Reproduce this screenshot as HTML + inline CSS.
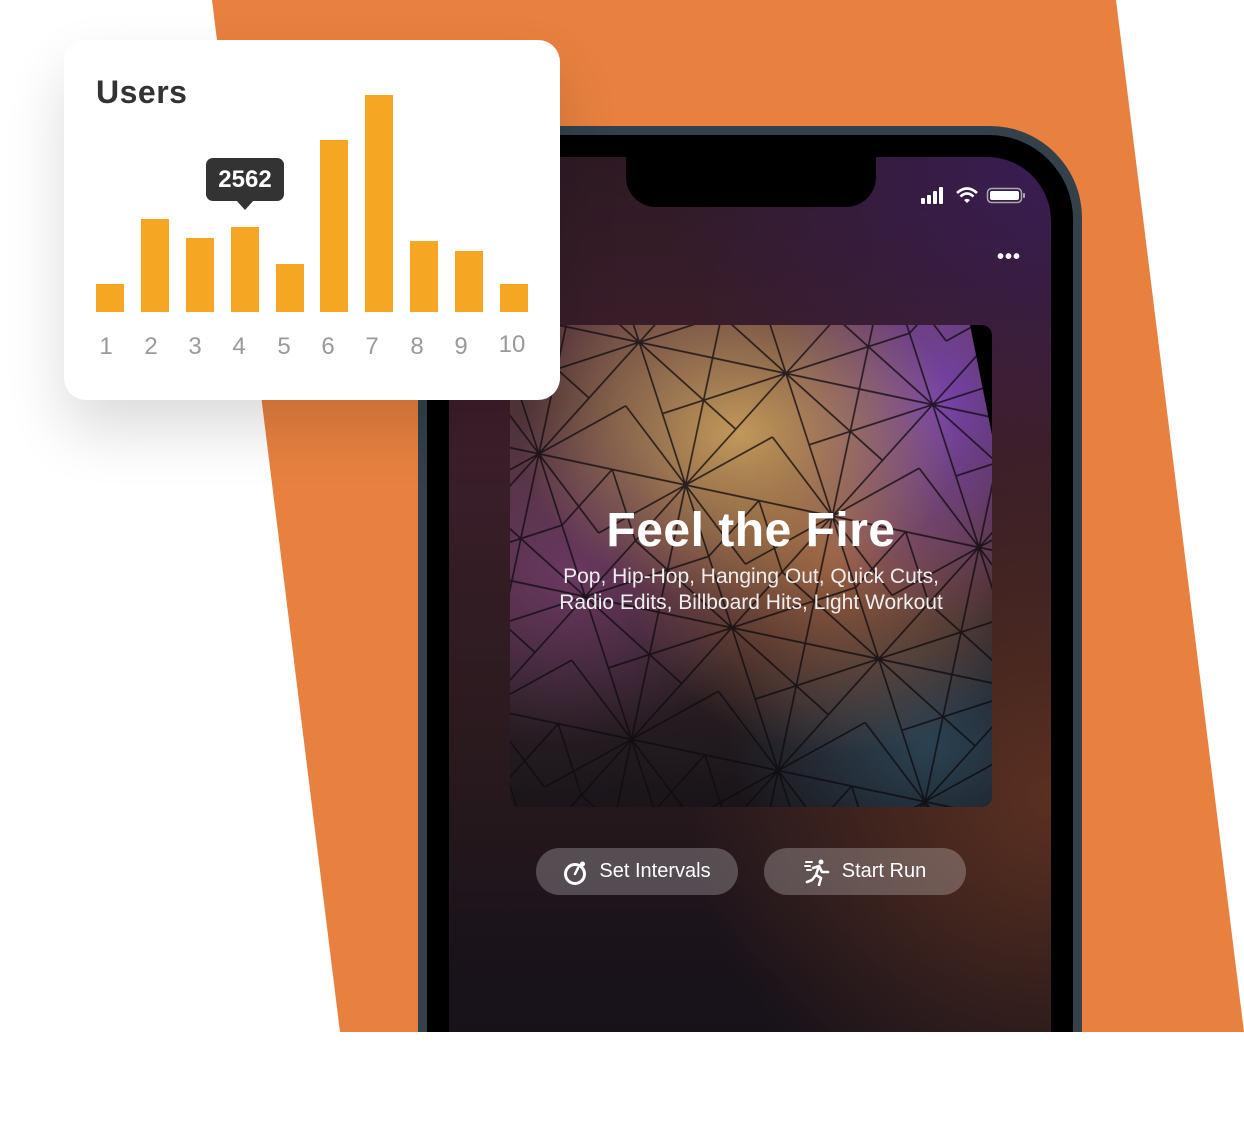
<!DOCTYPE html>
<html><head><meta charset="utf-8"><style>
*{margin:0;padding:0;box-sizing:border-box}
body{width:1244px;height:1142px;background:#fff;position:relative;overflow:hidden;font-family:"Liberation Sans",sans-serif}
.abs{position:absolute}
#clip{position:absolute;left:0;top:0;width:1244px;height:1032px;overflow:hidden}
.phone{left:418px;top:126px;width:664px;height:1000px;background:#34414a;border-radius:92px 92px 0 0}
.bezel{left:9px;top:9px;width:646px;height:990px;background:#000;border-radius:84px 84px 0 0}
.screen{left:22px;top:22px;width:602px;height:970px;border-radius:64px 64px 0 0;overflow:hidden;
background:radial-gradient(ellipse 420px 300px at 620px 0px,#3a1d56 0%,rgba(58,29,86,0) 100%),radial-gradient(ellipse 360px 360px at 600px 640px,#5a3020 0%,rgba(90,48,32,0) 100%),linear-gradient(180deg,#2e1a24 0%,#3e1f2c 25%,#2a1a1e 60%,#18121a 85%,#16121a 100%)}
.notch{left:177px;top:0;width:250px;height:50px;background:#000;border-radius:0 0 30px 30px}
.card{left:64px;top:40px;width:496px;height:360px;background:#fff;border-radius:22px;box-shadow:0 30px 60px rgba(0,0,0,.14)}
.bar{position:absolute;width:28px;background:#f5a623;bottom:88px}
.lbl{position:absolute;top:293px;width:28px;text-align:center;color:#9a9a9a;font-size:24px;font-weight:300}
.btn{position:absolute;top:848px;height:47px;width:202px;border-radius:24px;background:rgba(255,255,255,.24);color:#fff;font-size:20px;display:flex;align-items:center;justify-content:center;gap:10px}
</style></head><body>
<div id="clip">
<svg class="abs" style="left:0;top:0" width="1244" height="1032"><polygon points="212,0 1116,0 1244,1032 340,1032" fill="#e8813f"/></svg>
<div class="abs phone"><div class="abs bezel"><div class="abs screen">
<div class="abs notch"></div>
<svg class="abs" style="left:470px;top:28px" width="110" height="22">
<rect x="2" y="13" width="4" height="6" rx="1" fill="#fff"/><rect x="8" y="10" width="4" height="9" rx="1" fill="#fff"/><rect x="14" y="6" width="4" height="13" rx="1" fill="#fff"/><rect x="20" y="2" width="4" height="17" rx="1" fill="#fff"/>
<path d="M38 8 Q48 -1 58 8" stroke="#fff" stroke-width="2.6" fill="none"/><path d="M41.5 11.5 Q48 5.5 54.5 11.5" stroke="#fff" stroke-width="2.6" fill="none"/><path d="M45 15 L48 18 L51 15 Q48 12.5 45 15Z" fill="#fff"/>
<rect x="68.5" y="3.5" width="34" height="14" rx="4" fill="none" stroke="#aaa" stroke-width="1.5"/><rect x="71" y="6" width="29" height="9" rx="2" fill="#fff"/><rect x="104" y="8" width="2" height="5" rx="1" fill="#aaa"/></svg>
<div class="abs" style="left:548px;top:95px;color:#fff;font-size:20px;letter-spacing:1px;line-height:10px;font-weight:bold">•••</div>
<div class="abs" style="left:61px;top:168px;width:482px;height:482px;border-radius:10px;overflow:hidden;
background:radial-gradient(ellipse 220px 170px at 230px 110px,#e0b068 0%,rgba(200,140,80,0) 100%),radial-gradient(ellipse 170px 220px at 430px 80px,#9050d0 0%,rgba(120,70,180,0) 100%),radial-gradient(ellipse 220px 200px at 330px 230px,#c07850 0%,rgba(160,90,60,0) 100%),radial-gradient(ellipse 190px 170px at 60px 250px,#7a4070 0%,rgba(80,40,70,0) 100%),radial-gradient(ellipse 200px 160px at 420px 420px,#3a5a70 0%,rgba(50,80,100,0) 100%),linear-gradient(180deg,#6a4448 0%,#3e2c32 60%,#201a20 100%)">
<svg class="abs" style="left:0;top:0" width="482" height="482"><defs><pattern id="tp" width="150" height="260" patternUnits="userSpaceOnUse" patternTransform="rotate(12) translate(-20,-10)">
<g transform="scale(1.6667)"><path d="M0 0L45 78L0 156M90 0L45 78L90 156M0 0H90M0 78H90M0 156H90M0 0L67.5 39M90 0L22.5 39M45 78L45 0M45 78L0 117M45 78L90 117M0 39L45 78M90 39L45 78M0 78L22.5 117L0 156M90 78L67.5 117L90 156M45 78L45 156M0 156L67.5 117M90 156L22.5 117" stroke="#120d12" stroke-width="1" fill="none" opacity=".8"/></g></pattern>
<linearGradient id="sh" x1="0" y1="0" x2="1" y2="1"><stop offset="0" stop-color="#000" stop-opacity=".05"/><stop offset="1" stop-color="#000" stop-opacity=".3"/></linearGradient></defs>
<rect width="482" height="482" fill="url(#tp)"/><rect width="482" height="482" fill="url(#sh)"/>
<path d="M460 0L482 0L482 110Z" fill="#000"/></svg>
<div class="abs" style="left:0;top:178px;width:482px;text-align:center;color:#fff;font-weight:bold;font-size:48px;letter-spacing:.5px">Feel the Fire</div>
<div class="abs" style="left:0;top:239px;width:482px;text-align:center;color:#eee;font-size:21px;line-height:26px">Pop, Hip-Hop, Hanging Out, Quick Cuts,<br>Radio Edits, Billboard Hits, Light Workout</div>
</div>
<div class="abs" style="left:36px;top:875px;width:56px;height:56px;border-radius:50%;background:#9a9490"></div>
</div></div></div>
<div class="btn" style="left:536px"><svg width="26" height="28" viewBox="0 0 26 28"><circle cx="12" cy="16" r="9.5" fill="none" stroke="#fff" stroke-width="3"/><path d="M12 16L15 10" stroke="#fff" stroke-width="2.5" stroke-linecap="round"/><circle cx="19.5" cy="6" r="2.5" fill="#fff"/></svg>Set Intervals</div>
<div class="btn" style="left:764px"><svg width="28" height="28" viewBox="0 0 28 28"><circle cx="17" cy="4" r="2.5" fill="#fff"/><path d="M9 10L15 8L18 14L24 14M15 8L12 17L17 20L15 27M12 17L8 22L3 24" stroke="#fff" stroke-width="2.6" fill="none" stroke-linecap="round" stroke-linejoin="round"/><path d="M2 4H8M1 8H6M3 12H7" stroke="#fff" stroke-width="2" stroke-linecap="round"/></svg>Start Run</div>
</div>
<div class="abs card">
<div class="abs" style="left:32px;top:34px;font-size:32px;font-weight:bold;color:#333;letter-spacing:.5px">Users</div>
<div class="bar" style="left:32px;height:28px"></div>
<div class="bar" style="left:77px;height:93px"></div>
<div class="bar" style="left:122px;height:74px"></div>
<div class="bar" style="left:167px;height:85px"></div>
<div class="bar" style="left:212px;height:48px"></div>
<div class="bar" style="left:256px;height:172px"></div>
<div class="bar" style="left:301px;height:217px"></div>
<div class="bar" style="left:346px;height:71px"></div>
<div class="bar" style="left:391px;height:61px"></div>
<div class="bar" style="left:436px;height:28px"></div>
<div class="lbl" style="left:28px">1</div><div class="lbl" style="left:73px">2</div><div class="lbl" style="left:117px">3</div><div class="lbl" style="left:161px">4</div><div class="lbl" style="left:206px">5</div><div class="lbl" style="left:250px">6</div><div class="lbl" style="left:294px">7</div><div class="lbl" style="left:339px">8</div><div class="lbl" style="left:383px">9</div><div class="lbl" style="left:434px;top:291px">10</div>
<div class="abs" style="left:142px;top:118px;width:78px;height:43px;background:#333;border-radius:7px;color:#fff;font-size:24px;font-weight:bold;text-align:center;line-height:43px">2562</div>
<div class="abs" style="left:172px;top:160px;width:0;height:0;border-left:9px solid transparent;border-right:9px solid transparent;border-top:10px solid #333"></div>
</div>
</body></html>
